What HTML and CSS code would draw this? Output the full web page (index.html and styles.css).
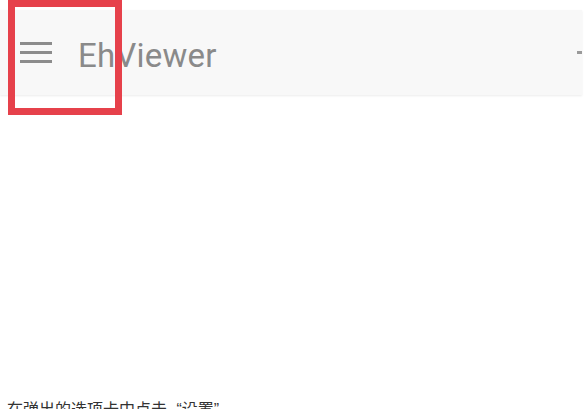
FILE: index.html
```html
<!DOCTYPE html>
<html lang="zh">
<head>
<meta charset="utf-8">
<title>EhViewer</title>
<link rel="stylesheet" href="styles.css">
</head>
<body>
<div class="screen">
  <div class="toolbar">
    <svg class="menu" width="32" height="22" viewBox="0 0 32 22" aria-hidden="true">
      <rect x="0" y="0" width="32" height="3" fill="#8c8c8c"/>
      <rect x="0" y="9" width="32" height="3" fill="#8c8c8c"/>
      <rect x="0" y="18" width="32" height="3" fill="#8c8c8c"/>
    </svg>
    <span class="title">EhViewer</span>
    <span class="edge-icon"></span>
  </div>
  <div class="highlight"></div>
</div>
<p class="caption">在弹出的选项卡中点击 “设置”</p>
</body>
</html>
```

FILE: styles.css
```css
html, body {
  margin: 0;
  padding: 0;
  background: #ffffff;
  overflow: hidden;
}
body {
  width: 585px;
  height: 409px;
  font-family: Roboto, "Noto Sans", "Noto Sans CJK SC", sans-serif;
}
.screen {
  position: relative;
  padding-top: 10px;
}
.toolbar {
  height: 85px;
  margin-right: 3px;
  background: #f8f8f8;
  box-shadow: 0 1px 2px rgba(0, 0, 0, 0.08);
  display: flex;
  align-items: center;
}
.menu {
  margin-left: 20px;
  flex: none;
  margin-top: 1px;
}
.title {
  margin-left: 26px;
  font-size: 33px;
  line-height: 1;
  padding-top: 6px;
  color: #8a8a8a;
  letter-spacing: 0.2px;
}
.edge-icon {
  margin-left: auto;
  width: 5px;
  height: 3px;
  background: #9a9a9a;
}
.highlight {
  position: absolute;
  left: 8px;
  top: 0;
  width: 100px;
  height: 101px;
  border: 7px solid #e6414b;
}
.caption {
  margin: 305px 0 0 7px;
  font-family: "Liberation Sans", "Noto Sans CJK SC", sans-serif;
  font-size: 16px;
  line-height: 20px;
  word-spacing: 5px;
  color: #333333;
  white-space: nowrap;
}
```
